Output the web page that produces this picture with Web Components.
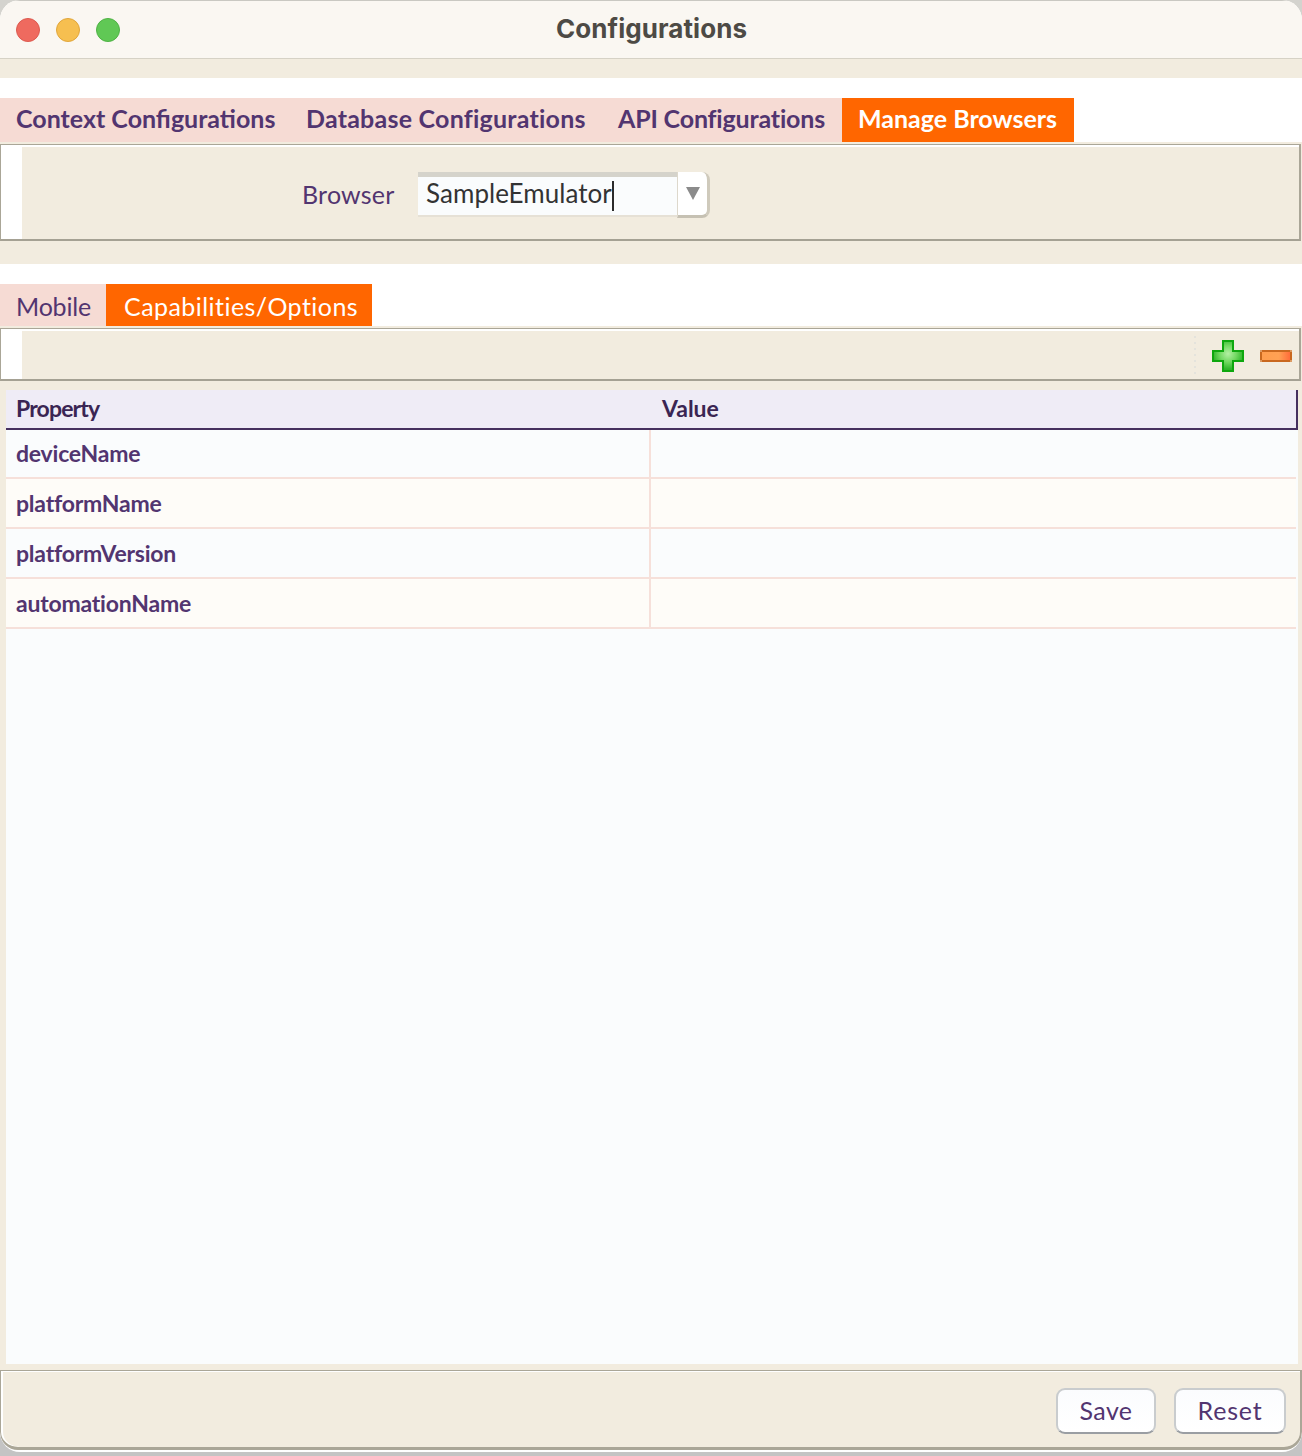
<!DOCTYPE html>
<html>
<head>
<meta charset="utf-8">
<style>
  html, body { margin: 0; padding: 0; height: 100%; }
  body { width: 1302px; height: 1456px; overflow: hidden; background: linear-gradient(#d4d3ce 0 40px, #c4c4c4 40px); font-family: Lato, sans-serif; font-variant-ligatures: none; }
</style>
</head>
<body>
<config-window title="Configurations">
  <spacer-band height="20" color="#f2ecdf"></spacer-band>
  <spacer-band height="20" color="#fff"></spacer-band>
  <tab-strip height="44" shift="-4">
    <tab-item width="290" pad="16" spacing="0" weight="700">Context Configurations</tab-item>
    <tab-item width="312" pad="16" spacing="0.23" weight="700">Database Configurations</tab-item>
    <tab-item width="240" pad="16" spacing="-0.18" weight="700">API Configurations</tab-item>
    <tab-item width="232" pad="16" weight="700" active>Manage Browsers</tab-item>
  </tab-strip>
  <inset-panel height="97">
    <browser-field label="Browser" value="SampleEmulator"></browser-field>
  </inset-panel>
  <spacer-band height="23" color="#f2ecdf"></spacer-band>
  <spacer-band height="20" color="#fff"></spacer-band>
  <tab-strip height="42" shift="2">
    <tab-item width="106" pad="16" spacing="-0.2" weight="400">Mobile</tab-item>
    <tab-item width="266" pad="18" spacing="0.45" weight="400" active>Capabilities/Options</tab-item>
  </tab-strip>
  <inset-panel height="53">
    <row-tools></row-tools>
  </inset-panel>
  <prop-table></prop-table>
  <action-bar></action-bar>
</config-window>

<script>
class ConfigWindow extends HTMLElement {
  constructor() {
    super();
    this.attachShadow({ mode: 'open' });
    this.shadowRoot.innerHTML = `
      <style>
        :host { display: block; width: 1302px; height: 1452px; background: #fff; border-radius: 20px; overflow: hidden; }
        .bar { box-sizing: border-box; background: #faf7f2; border-top: 1px solid #c9c8c2; border-bottom: 1px solid #d6d2c6; height: 59px; margin-bottom: -1px; display: flex; gap: 16px; align-items: center; padding-left: 16px; position: relative; }
        .dot { width: 24px; height: 24px; box-sizing: border-box; border-radius: 50%; border: 1px solid; }
        .r { background: #ef6a5f; border-color: #dc5a50; }
        .y { background: #f6bf50; border-color: #e0a63c; }
        .g { background: #60c855; border-color: #4fb245; }
        .title { position: absolute; left: 1px; right: 0; text-align: center; top: 13px; font: 700 26px/30px Inter, sans-serif; letter-spacing: 0.07px; color: #4d4a45; }
      </style>
      <div class="bar">
        <span class="dot r"></span><span class="dot y"></span><span class="dot g"></span>
        <div class="title">${this.getAttribute('title')}</div>
      </div>
      <slot></slot>
    `;
  }
}

class SpacerBand extends HTMLElement {
  connectedCallback() {
    this.attachShadow({ mode: 'open' });
    this.shadowRoot.innerHTML = `<style>:host { display: block; height: ${this.getAttribute('height')}px; background: ${this.getAttribute('color')}; }</style>`;
  }
}

class TabStrip extends HTMLElement {
  connectedCallback() {
    this.attachShadow({ mode: 'open' });
    this.shadowRoot.innerHTML = `
      <style>:host { display: flex; height: ${this.getAttribute('height')}px; background: #fff; --tab-shift: ${this.getAttribute('shift') || 0}px; }</style>
      <slot></slot>
    `;
  }
}

class TabItem extends HTMLElement {
  connectedCallback() {
    const active = this.hasAttribute('active');
    this.attachShadow({ mode: 'open' });
    this.shadowRoot.innerHTML = `
      <style>
        :host {
          display: flex; align-items: center; box-sizing: border-box; white-space: nowrap;
          width: ${this.getAttribute('width')}px; padding-left: ${this.getAttribute('pad')}px;
          background: ${active ? '#ff6600' : '#f6dbd4'}; color: ${active ? '#fff' : '#523570'};
          font: ${this.getAttribute('weight')} 25px/30px Lato, sans-serif;
          letter-spacing: ${this.getAttribute('spacing') || 0}px;
        }
        span { margin-top: var(--tab-shift); }
      </style>
      <span><slot></slot></span>
    `;
  }
}

class InsetPanel extends HTMLElement {
  connectedCallback() {
    const h = +this.getAttribute('height');
    this.attachShadow({ mode: 'open' });
    this.shadowRoot.innerHTML = `
      <style>
        :host { display: block; background: #f2ecdf; padding: 2px 1px 0 0; }
        .frame {
          height: ${h}px; box-sizing: border-box; display: flex; background: #fff;
          border: 1px solid #aaa697; border-bottom: 2px solid #a5a193; border-right-width: 2px;
          padding-top: 2px;
        }
        .gutter { width: 21px; background: #fff; flex: none; }
        .body { flex: 1; background: #f2ecdf; position: relative; }
      </style>
      <div class="frame"><div class="gutter"></div><div class="body"><slot></slot></div></div>
    `;
  }
}

class BrowserField extends HTMLElement {
  connectedCallback() {
    this.attachShadow({ mode: 'open' });
    this.shadowRoot.innerHTML = `
      <style>
        :host { display: flex; align-items: flex-start; padding: 25px 0 0 280px; }
        label { width: 116px; flex: none; margin-top: 7px; color: #523570; font: 400 25px/30px Lato, sans-serif; letter-spacing: 0.2px; }
        .combo { display: flex; width: 292px; height: 46px; flex: none; }
        .input {
          width: 259px; box-sizing: border-box; background: #fafcfd; height: 45px;
          border-top: 5px solid #d5d3cb; border-bottom: 2px solid #e6e1d6;
          padding: 0 0 7px 8px; color: #333; white-space: nowrap;
          font: 400 26px/34px Lato, sans-serif; letter-spacing: 0.05px; display: flex; align-items: center;
        }
        .caret { width: 2px; height: 30px; background: #2b2b2b; margin: 7px 0 0 0; }
        .drop {
          width: 33px; height: 46px; box-sizing: border-box; background: #fff;
          border-right: 3px solid #cfcabc; border-bottom: 3px solid #c6c1b3; border-left: 1px solid #ddd8cc;
          border-radius: 0 8px 8px 0; display: flex; align-items: center; justify-content: center;
        }
      </style>
      <label>${this.getAttribute('label')}</label>
      <div class="combo">
        <div class="input">${this.getAttribute('value')}<span class="caret"></span></div>
        <div class="drop"><svg width="14" height="13" viewBox="0 0 14 13"><path d="M0 0h14L7 13z" fill="#8b8b8b"/></svg></div>
      </div>
    `;
  }
}

class RowTools extends HTMLElement {
  connectedCallback() {
    this.attachShadow({ mode: 'open' });
    this.shadowRoot.innerHTML = `
      <style>
        :host { display: flex; justify-content: flex-end; align-items: center; height: 47px; padding-right: 7px; box-sizing: border-box; gap: 16px; }
        .sep { width: 2px; height: 40px; background: repeating-linear-gradient(#e4e3dc 0 2px, transparent 2px 6px); margin-top: 2px; }
        svg { display: block; margin-top: 2px; shape-rendering: crispEdges; }
      </style>
      <div class="sep"></div>
      <svg width="32" height="32" viewBox="0 0 32 32">
        <defs>
          <radialGradient id="p" cx="50%" cy="42%" r="55%">
            <stop offset="0" stop-color="#b4f0a4"/><stop offset="0.55" stop-color="#70d860"/><stop offset="1" stop-color="#2eb52a"/>
          </radialGradient>
        </defs>
        <path d="M10 0h12v10h10v12H22v10H10V22H0V10h10z" fill="#0ea70e"/>
        <path d="M12 2h8v10h10v8H20v10h-8V20H2v-8h10z" fill="url(#p)"/>
      </svg>
      <svg width="32" height="12" viewBox="0 0 32 12">
        <defs>
          <linearGradient id="m" x1="0" x2="1" y1="0" y2="0">
            <stop offset="0" stop-color="#ff9d4e"/><stop offset="0.6" stop-color="#ffa154"/><stop offset="1" stop-color="#ff6d3a"/>
          </linearGradient>
        </defs>
        <path d="M2 0h28v2h2v8h-2v2H2v-2H0V2h2z" fill="#c9681f"/>
        <path d="M0 0h2v2H0zM30 0h2v2h-2zM0 10h2v2H0zM30 10h2v2h-2z" fill="#dc9a62"/>
        <rect x="2" y="2" width="28" height="8" fill="url(#m)"/>
      </svg>
    `;
  }
}

class PropTable extends HTMLElement {
  connectedCallback() {
    const names = ['deviceName', 'platformName', 'platformVersion', 'automationName'];
    this.attachShadow({ mode: 'open' });
    this.shadowRoot.innerHTML = `
      <style>
        :host { display: block; height: 989px; padding: 9px 4px 0 6px; background: #f2ecdf; box-sizing: border-box; }
        .wrap { height: 974px; background: #fafcfd; }
        .head {
          display: grid; grid-template-columns: 644px 1fr; height: 40px; box-sizing: border-box;
          background: #efecf6; border-bottom: 2px solid #46305f; border-right: 2px solid #46305f;
          color: #3a2553; font: 700 23px/38px Lato, sans-serif;
        }
        .head div { padding-left: 10px; margin-top: -1px; }
        .head div:first-child { letter-spacing: -0.85px; }
        .head div + div { padding-left: 12px; }
        .row {
          display: grid; grid-template-columns: 643px 1fr; height: 50px; box-sizing: border-box; margin-right: 2px;
          border-bottom: 2px solid #f6e0da; color: #523570; font: 700 23px/48px Lato, sans-serif; letter-spacing: -0.22px;
        }
        .row:nth-child(odd) { background: #fefcf8; }
        .row:nth-child(2) { height: 49px; line-height: 47px; }
        .row div { padding-left: 10px; box-sizing: border-box; }
        .row div + div { border-left: 2px solid #f6e0da; }
      </style>
      <div class="wrap">
        <div class="head"><div>Property</div><div>Value</div></div>
        ${names.map(n => `<div class="row"><div>${n}</div><div></div></div>`).join('')}
      </div>
    `;
  }
}

class ActionBar extends HTMLElement {
  connectedCallback() {
    this.attachShadow({ mode: 'open' });
    this.shadowRoot.innerHTML = `
      <style>
        :host {
          display: flex; justify-content: flex-end; gap: 18px; box-sizing: border-box; height: 80px;
          background: #f2ecdf; border: 1px solid #aaa697; border-bottom-width: 3px; border-right-width: 2px;
          border-radius: 0 0 18px 18px; box-shadow: inset 0 1px 0 #fff, inset 2px 0 0 #fff;
          padding: 17px 14px 0 0;
        }
        button {
          height: 46px; box-sizing: border-box; border: 2px solid #c9ccce; border-bottom-color: #9a9ea3; border-radius: 9px;
          background: linear-gradient(#fbfcfe, #fff); padding: 0 0 3px; color: #523570;
          font: 400 25px/30px Lato, sans-serif; letter-spacing: 0.4px;
        }
        .save { width: 100px; }
        .reset { width: 112px; letter-spacing: 0.8px; }
      </style>
      <button class="save">Save</button><button class="reset">Reset</button>
    `;
  }
}

customElements.define('config-window', ConfigWindow);
customElements.define('spacer-band', SpacerBand);
customElements.define('tab-strip', TabStrip);
customElements.define('tab-item', TabItem);
customElements.define('inset-panel', InsetPanel);
customElements.define('browser-field', BrowserField);
customElements.define('row-tools', RowTools);
customElements.define('prop-table', PropTable);
customElements.define('action-bar', ActionBar);
</script>
</body>
</html>
